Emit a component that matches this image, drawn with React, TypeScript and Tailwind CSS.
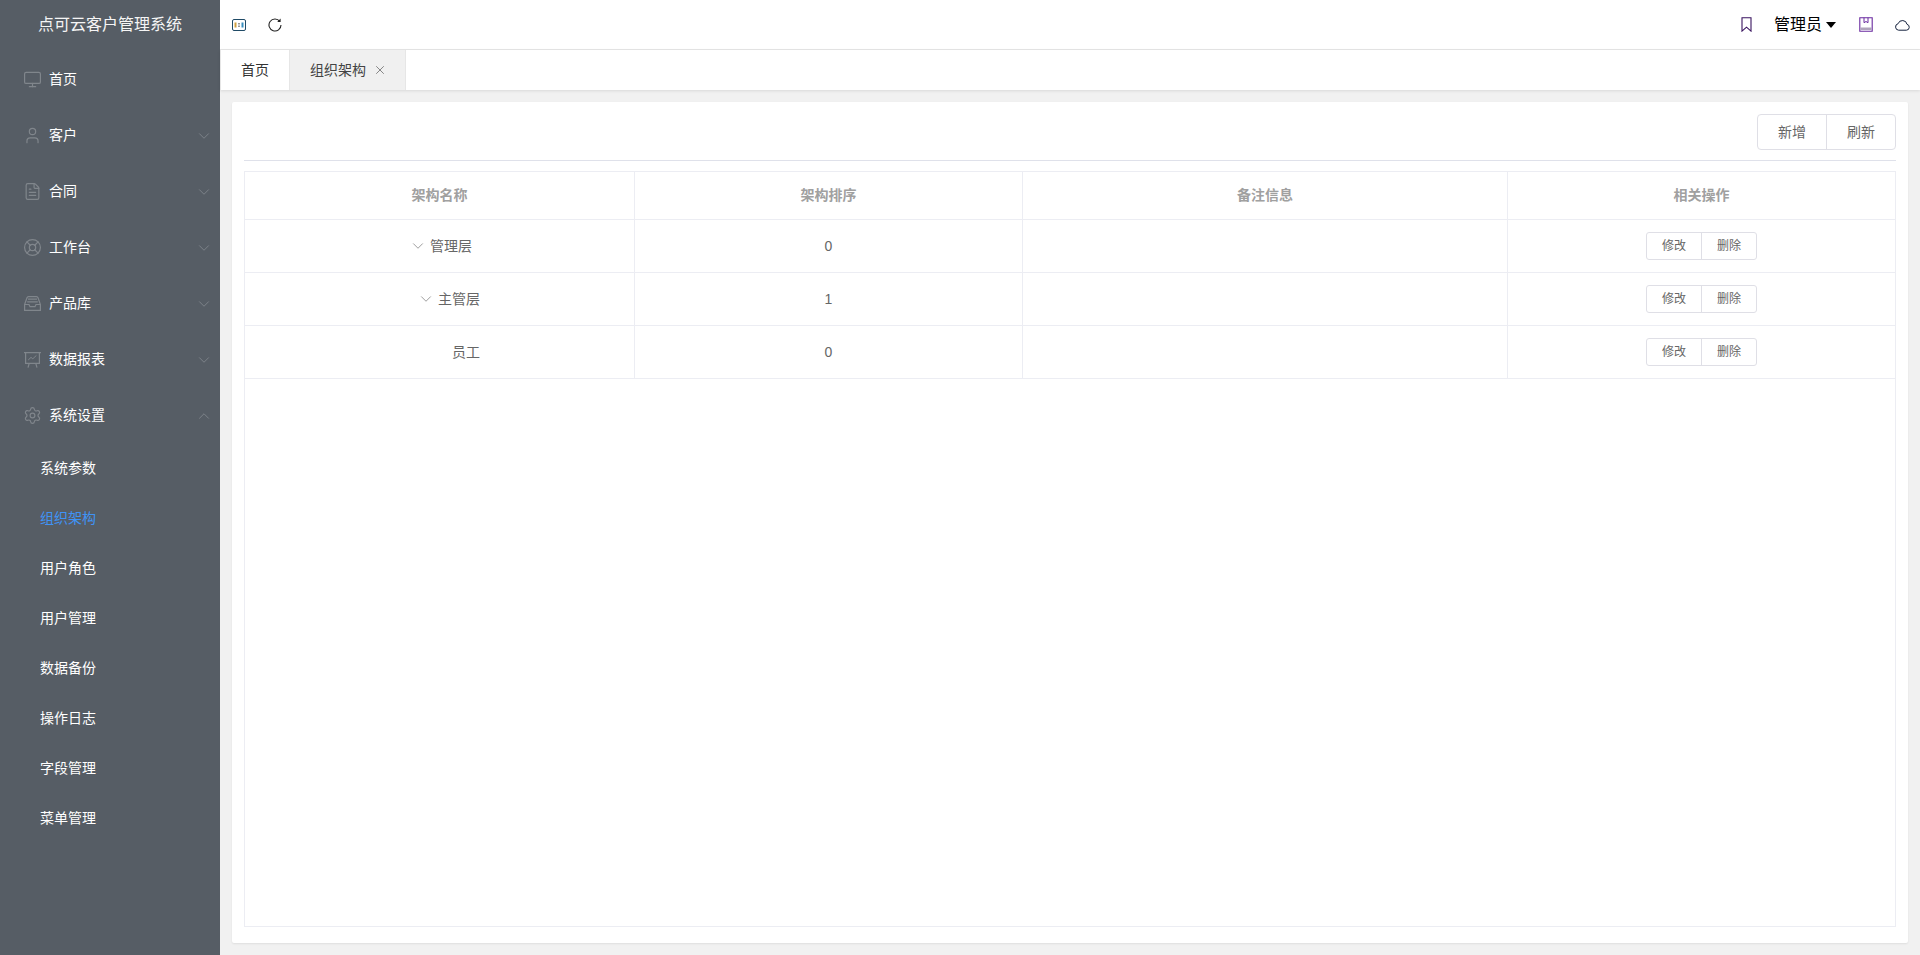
import React from 'react';
import { ChevronDown, ChevronUp, X, Monitor, User, FileText, LifeBuoy, Settings } from 'lucide-react';

const fontStack = "font-['Liberation_Sans','Noto_Sans_CJK_SC',sans-serif]";

const InboxIcon = ({ className }: { className?: string }) => (
  <svg width="17" height="15" viewBox="0 0 17 15" fill="none" stroke="currentColor" strokeWidth="1.2" className={className}>
    <path d="M0.6 8.5 3 1.8Q3.3 0.6 4.5 0.6h8q1.2 0 1.5 1.2l2.4 6.7v5.9H0.6z" />
    <path d="M0.6 8.5h4.4l1 2.2h5l1-2.2h4.4" />
    <path d="M4 3.2h9M3.2 5.8h10.6" />
  </svg>
);

const BoardIcon = ({ className }: { className?: string }) => (
  <svg width="17" height="16" viewBox="0 0 17 16" fill="none" stroke="currentColor" strokeWidth="1.2" className={className}>
    <path d="M0 0.7h17M1.6 0.7v10.6h13.8V0.7" />
    <path d="M5.2 11.3 4 15.6M11.8 11.3l1.2 4.3" />
    <path d="M4.2 8 7 5.4l1.8 1.4 3.6-3.4" strokeWidth="1" />
  </svg>
);

const menus = [
  { label: '首页', icon: Monitor },
  { label: '客户', icon: User, arrow: 'down' },
  { label: '合同', icon: FileText, arrow: 'down' },
  { label: '工作台', icon: LifeBuoy, arrow: 'down' },
  { label: '产品库', icon: InboxIcon, arrow: 'down', custom: true },
  { label: '数据报表', icon: BoardIcon, arrow: 'down', custom: true },
  { label: '系统设置', icon: Settings, arrow: 'up' },
];

const subMenus = ['系统参数', '组织架构', '用户角色', '用户管理', '数据备份', '操作日志', '字段管理', '菜单管理'];

const rows = [
  { name: '管理层', sort: '0', indent: 'pl-[2px]', arrow: true },
  { name: '主管层', sort: '1', indent: 'pl-[18px]', arrow: true },
  { name: '员工', sort: '0', indent: 'pl-[32px]', arrow: false },
];

const Sidebar = () => (
  <aside className="w-[220px] shrink-0 bg-[#565d65] text-white">
    <div className="h-[50px] flex items-center justify-center text-[16px] text-[#f5f5f5]">点可云客户管理系统</div>
    {menus.map((m) => {
      const Icon = m.icon as any;
      return (
        <div key={m.label} className="h-[56px] flex items-center pl-[23px] pr-[7px] pt-[3px] text-[14px]">
          <span className="w-[19px] mr-[7px] flex justify-center">
            {m.custom
              ? <Icon className="text-[#80868c]" />
              : <Icon size={19} strokeWidth={1.5} className="text-[#80868c]" />}
          </span>
          <span>{m.label}</span>
          {m.arrow === 'down' && <ChevronDown size={18} strokeWidth={1.2} className="ml-auto text-[#80868c]" />}
          {m.arrow === 'up' && <ChevronUp size={18} strokeWidth={1.2} className="ml-auto text-[#80868c]" />}
        </div>
      );
    })}
    <div className="pt-px">
      {subMenus.map((s) => (
        <div key={s} className={`h-[50px] flex items-center pl-10 text-[14px] ${s === '组织架构' ? 'text-[#3f93f5]' : 'text-white'}`}>
          {s}
        </div>
      ))}
    </div>
  </aside>
);

const Header = () => (
  <header className="h-[50px] shrink-0 bg-white border-b border-[#e6e6e6] flex items-center text-black">
    <svg width="14" height="12" viewBox="0 0 14 12" fill="none" className="ml-[12px]">
      <rect x="0.5" y="0.5" width="13" height="11" rx="1.5" stroke="#1f4a66" />
      <rect x="2.5" y="3.5" width="2" height="5" fill="#d0a040" />
      <rect x="6.5" y="4" width="1" height="1.5" fill="#333" />
      <rect x="6.5" y="6.5" width="1" height="1.5" fill="#333" />
      <rect x="9.5" y="3.5" width="2" height="5" fill="#3a8fc0" />
    </svg>
    <svg width="14" height="14" viewBox="0 0 14 14" fill="none" className="ml-[22px]">
      <path d="M11.8 3.4A6 6 0 1 0 13 7" stroke="#222" strokeWidth="1.1" />
      <path d="M9.2 3.9h3.4V0.6z" fill="#222" />
    </svg>
    <div className="ml-auto flex items-center">
      <svg width="11" height="15" viewBox="0 0 11 15" fill="none">
        <path d="M1 0.7h9v13.4L5.5 10.2 1 14.1z" stroke="#3a1460" strokeWidth="1.1" />
      </svg>
      <span className="ml-[22px] text-[16px] leading-none">管理员</span>
      <span className="ml-[4px] w-0 h-0 border-x-[5px] border-x-transparent border-t-[6px] border-t-black" />
      <svg width="14" height="15" viewBox="0 0 14 15" fill="none" className="ml-[23px]">
        <path d="M0.8 0.7h12.4v13.6H0.8z" stroke="#6a2aa0" strokeWidth="1.1" />
        <path d="M5 0.7v5l2-1.2 2 1.2v-5" stroke="#6a2aa0" />
        <rect x="1.3" y="10.5" width="11.4" height="2.5" fill="#b0a4bc" />
      </svg>
      <svg width="15" height="13" viewBox="0 0 15 13" fill="none" className="ml-[22px] mr-[10px]">
        <path d="M3.6 12.2h7.8a3 3 0 0 0 .6-5.9 4.6 4.6 0 0 0-8.9-.6 3.3 3.3 0 0 0 .5 6.5z" stroke="#14213d" strokeWidth="1" />
      </svg>
    </div>
  </header>
);

const Tabs = () => (
  <div className="h-[40px] shrink-0 bg-white flex text-[14px] shadow-[0_1px_3px_rgba(0,0,0,0.1)] relative">
    <div className="w-[70px] flex items-center justify-center text-[#333] border-l border-r border-[#e6e6e6]">首页</div>
    <div className="w-[116px] flex items-center pl-[20px] bg-[#f0f0f0] text-[#444] border-r border-[#e6e6e6]">
      组织架构
      <X size={14} strokeWidth={1.5} className="ml-[7px] text-[#777]" />
    </div>
  </div>
);

const ActionButtons = () => (
  <div className="flex h-[28px] w-[111px] border border-[#dfdfe6] rounded-[3px] text-[12px] text-[#666]">
    <span className="flex-1 flex items-center justify-center border-r border-[#dfdfe6]">修改</span>
    <span className="w-[54px] flex items-center justify-center">删除</span>
  </div>
);

const Content = () => (
  <main className="flex-1 bg-[#f1f1f1] pt-3 pl-3 pr-3 pb-3 min-h-0">
    <div className="h-full bg-white rounded-[2px] shadow-[0_1px_2px_rgba(0,0,0,0.08)] px-3 pt-3 pb-4 flex flex-col">
      <div className="flex justify-end">
        <div className="flex h-[36px] border border-[#dfdfe6] rounded-[4px] text-[14px] text-[#666]">
          <span className="w-[69px] flex items-center justify-center border-r border-[#dfdfe6]">新增</span>
          <span className="w-[68px] flex items-center justify-center">刷新</span>
        </div>
      </div>
      <div className="mt-[10px] h-[1px] bg-[#dfe1ea]" />
      <div className="mt-[10px] flex-1 min-h-0 border border-[#ecedf3]">
        <div className="grid grid-cols-[390px_388px_485px_1fr] h-[48px] border-b border-[#ecedf3] text-[14px] font-bold text-[#a0a0a0]">
          {['架构名称', '架构排序', '备注信息', '相关操作'].map((h, i) => (
            <div key={h} className={`flex items-center justify-center ${i < 3 ? 'border-r border-[#ecedf3]' : ''}`}>{h}</div>
          ))}
        </div>
        {rows.map((r) => (
          <div key={r.name} className="grid grid-cols-[390px_388px_485px_1fr] h-[53px] border-b border-[#ecedf3] text-[14px] text-[#666]">
            <div className="flex items-center justify-center border-r border-[#ecedf3]">
              <div className={`flex items-center ${r.indent}`}>
                {r.arrow
                  ? <ChevronDown size={18} strokeWidth={1.1} className="mr-[3px] text-[#888]" />
                  : <span className="w-[18px] mr-[3px]" />}
                <span>{r.name}</span>
              </div>
            </div>
            <div className="flex items-center justify-center border-r border-[#ecedf3]">{r.sort}</div>
            <div className="border-r border-[#ecedf3]" />
            <div className="flex items-center justify-center"><ActionButtons /></div>
          </div>
        ))}
      </div>
    </div>
  </main>
);

export default function App() {
  return (
    <div className={`h-[955px] w-[1920px] flex overflow-hidden ${fontStack}`}>
      <Sidebar />
      <div className="flex-1 flex flex-col min-w-0">
        <Header />
        <Tabs />
        <Content />
      </div>
    </div>
  );
}
